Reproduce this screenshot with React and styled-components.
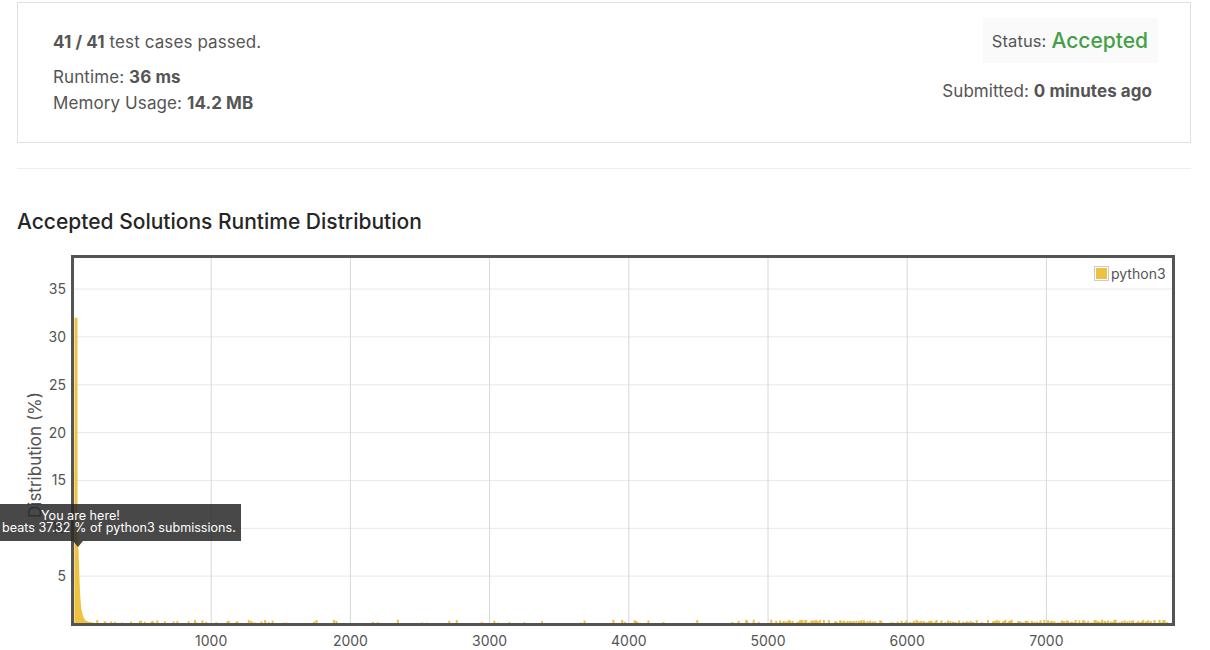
import React from "react";
import styled, { createGlobalStyle } from "styled-components";

const Global = createGlobalStyle`
  html, body { margin: 0; padding: 0; background: #fff; }
  body { font-family: Inter, "Liberation Sans", Arial, sans-serif; color: #555; }
`;

const Page = styled.div`
  width: 1210px;
  height: 650px;
  overflow: hidden;
  position: relative;
`;

const Section = styled.div`
  padding: 2px 19px 0 17px;
`;

const Card = styled.div`
  border: 1px solid #e1e1e1;
  height: 139px;
  display: flex;
  justify-content: space-between;
  padding: 0 32px 0 35px;
`;

const LeftCol = styled.div`
  display: flex;
  flex-direction: column;
  padding-top: 28px;
`;

const Title = styled.div`
  font-size: 17px;
  line-height: 22px;
  margin-bottom: 11px;
  letter-spacing: 0.1px;
`;

const Line = styled.div`
  font-size: 17px;
  line-height: 26px;
  letter-spacing: 0.1px;
`;

const B = styled.b`
  font-weight: 700;
  color: #555;
`;

const RightCol = styled.div`
  display: flex;
  flex-direction: column;
  align-items: flex-end;
  padding-top: 15px;
`;

const StatusBox = styled.div`
  background: #fafafa;
  height: 45px;
  display: flex;
  align-items: center;
  padding: 0 10px 0 9px;
  font-size: 16.5px;
  letter-spacing: 0.1px;
  gap: 5px;
`;

const Accepted = styled.span`
  color: #43a047;
  font-size: 21px;
  font-weight: 500;
  letter-spacing: 0;
`;

const Submitted = styled.div`
  font-size: 17px;
  letter-spacing: 0.05px;
  line-height: 20px;
  margin-top: 18px;
  margin-right: 6px;
`;

const Rule = styled.hr`
  border: 0;
  border-top: 1px solid #eee;
  margin: 25px 0 0 0;
`;

const Heading = styled.h3`
  margin: 40px 0 0 0;
  font-size: 21px;
  font-weight: 500;
  line-height: 26px;
  color: #262626;
`;

const ChartArea = styled.div`
  position: absolute;
  left: 0;
  top: 250px;
  width: 1210px;
  height: 400px;
`;

const ChartSvg = styled.svg`
  display: block;
  font-family: Inter, "Liberation Sans", Arial, sans-serif;
`;

const AxisLabel = styled.div`
  position: absolute;
  left: 35px;
  top: 205px;
  transform: translate(-50%, -50%) rotate(-90deg);
  white-space: nowrap;
  font-size: 17px;
  color: #545454;
`;

const Legend = styled.div`
  position: absolute;
  left: 1094px;
  top: 15px;
  display: flex;
  align-items: center;
  gap: 2px;
  font-size: 14px;
  color: #545454;
`;

const LegendSwatch = styled.div`
  width: 15px;
  height: 15px;
  border: 1px solid #ccc;
  padding: 1px;
  box-sizing: border-box;
  &::after {
    content: "";
    display: block;
    width: 100%;
    height: 100%;
    background: #edc240;
  }
`;

const Tooltip = styled.div`
  position: absolute;
  left: 0;
  top: 254px;
  width: 241px;
  height: 37px;
  box-sizing: border-box;
  background: rgba(40, 40, 40, 0.85);
  color: #fff;
  font-size: 12.6px;
  line-height: 12px;
  padding-top: 6px;
  &::after {
    content: "";
    position: absolute;
    left: 73px;
    bottom: -6px;
    border-left: 5px solid transparent;
    border-right: 5px solid transparent;
    border-top: 6px solid rgba(40, 40, 40, 0.85);
  }
`;

const TipLine = styled.div`
  padding-left: ${(p) => p.$indent}px;
  white-space: nowrap;
`;

const X0 = 72;
const XS = 0.1392;
const Y0 = 374;
const YS = 9.57;
const px = (x) => X0 + x * XS;
const py = (v) => Y0 - v * YS;

function makeBumps() {
  let seed = 12345;
  const rnd = () => {
    seed = (seed * 1103515245 + 12345) % 2147483648;
    return seed / 2147483648;
  };
  const out = [];
  for (let x = 120; x < 7910; x += 9) {
    let p;
    if (x < 1900) p = 0.28;
    else if (x < 4700) p = 0.08;
    else if (x < 5100) p = 0.3;
    else p = 0.65;
    if (rnd() < p) {
      const h = 0.1 + rnd() * 0.35;
      out.push([x, h]);
    }
  }
  return out;
}
const bumps = makeBumps();

const spike = [
  [74.5, 374],
  [74.5, py(32)],
  [77.5, py(32)],
  [77.5, 292],
  [78.5, 300],
  [79.5, 330],
  [80.5, 350],
  [81.5, 360],
  [83, 366],
  [85, 370],
  [88, 371.5],
  [92, 372.5],
  [96, 373],
  [96, 374],
]
  .map((p) => p.join(","))
  .join(" ");

function Chart() {
  const xt = [1000, 2000, 3000, 4000, 5000, 6000, 7000];
  const yt = [5, 10, 15, 20, 25, 30, 35];
  return (
    <ChartSvg width="1210" height="400" viewBox="0 0 1210 400">
      {yt.map((v) => (
        <line key={"h" + v} x1="74" x2="1172" y1={py(v)} y2={py(v)} stroke="#e8e8e8" strokeWidth="1" />
      ))}
      {xt.map((v) => (
        <line key={"v" + v} x1={px(v)} x2={px(v)} y1="8" y2="373" stroke="#d8d8d8" strokeWidth="1" />
      ))}
      {bumps.map(([x, h], i) => (
        <rect key={i} x={px(x)} y={py(h)} width="2" height={Y0 - py(h)} fill="#edc240" />
      ))}
      <rect x="73" y={py(19)} width="1.5" height={Y0 - py(19)} fill="#edc240" opacity="0.55" />
      <polygon points={spike} fill="#edc240" />
      <rect x="72.5" y="6.5" width="1101" height="368" fill="none" stroke="#545454" strokeWidth="3" />
      {yt.map((v) => (
        <text key={"yl" + v} x="66" y={py(v) + 5} textAnchor="end" fontSize="14" fill="#545454">
          {v}
        </text>
      ))}
      {xt.map((v) => (
        <text key={"xl" + v} x={px(v)} y="396" textAnchor="middle" fontSize="14" fill="#545454">
          {v}
        </text>
      ))}
    </ChartSvg>
  );
}

export default function App() {
  return (
    <Page>
      <Global />
      <Section>
        <Card>
          <LeftCol>
            <Title>
              <B>41 / 41</B> test cases passed.
            </Title>
            <Line>
              Runtime: <B>36 ms</B>
            </Line>
            <Line>
              Memory Usage: <B>14.2 MB</B>
            </Line>
          </LeftCol>
          <RightCol>
            <StatusBox>
              Status: <Accepted>Accepted</Accepted>
            </StatusBox>
            <Submitted>
              Submitted: <B>0 minutes ago</B>
            </Submitted>
          </RightCol>
        </Card>
        <Rule />
        <Heading>Accepted Solutions Runtime Distribution</Heading>
      </Section>
      <ChartArea>
        <Chart />
        <AxisLabel>Distribution (%)</AxisLabel>
        <Legend>
          <LegendSwatch />
          python3
        </Legend>
        <Tooltip>
          <TipLine $indent={41}>You are here!</TipLine>
          <TipLine $indent={2}>beats 37.32 % of python3 submissions.</TipLine>
        </Tooltip>
      </ChartArea>
    </Page>
  );
}
